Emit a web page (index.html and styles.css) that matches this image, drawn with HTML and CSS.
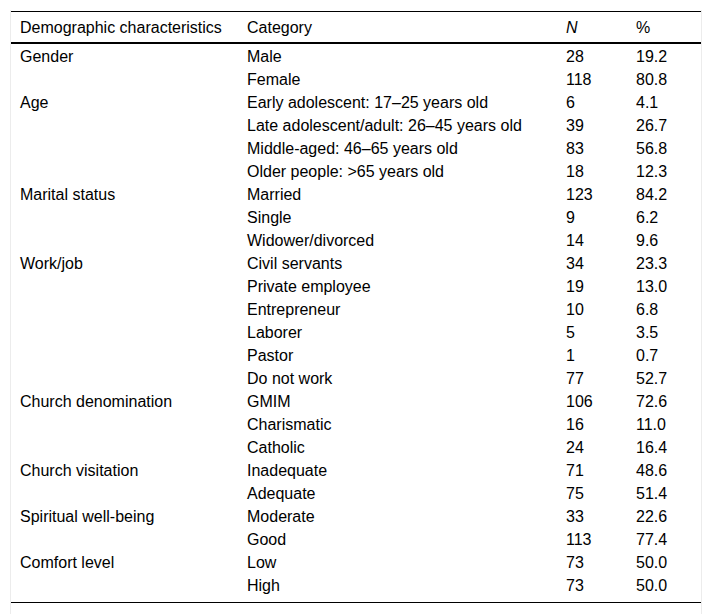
FILE: index.html
```html
<!DOCTYPE html>
<html lang="en">
<head>
<meta charset="utf-8">
<title>Demographic characteristics</title>
<link rel="stylesheet" href="styles.css">
</head>
<body>
<div class="frame">
<table class="data">
<colgroup>
<col class="c1"><col class="c2"><col class="c3"><col class="c4">
</colgroup>
<thead>
<tr><th>Demographic characteristics</th><th>Category</th><th><i>N</i></th><th>%</th></tr>
</thead>
<tbody>
<tr><td>Gender</td><td>Male</td><td>28</td><td>19.2</td></tr>
<tr><td></td><td>Female</td><td>118</td><td>80.8</td></tr>
<tr><td>Age</td><td>Early adolescent: 17–25 years old</td><td>6</td><td>4.1</td></tr>
<tr><td></td><td>Late adolescent/adult: 26–45 years old</td><td>39</td><td>26.7</td></tr>
<tr><td></td><td>Middle-aged: 46–65 years old</td><td>83</td><td>56.8</td></tr>
<tr><td></td><td>Older people: &gt;65 years old</td><td>18</td><td>12.3</td></tr>
<tr><td>Marital status</td><td>Married</td><td>123</td><td>84.2</td></tr>
<tr><td></td><td>Single</td><td>9</td><td>6.2</td></tr>
<tr><td></td><td>Widower/divorced</td><td>14</td><td>9.6</td></tr>
<tr><td>Work/job</td><td>Civil servants</td><td>34</td><td>23.3</td></tr>
<tr><td></td><td>Private employee</td><td>19</td><td>13.0</td></tr>
<tr><td></td><td>Entrepreneur</td><td>10</td><td>6.8</td></tr>
<tr><td></td><td>Laborer</td><td>5</td><td>3.5</td></tr>
<tr><td></td><td>Pastor</td><td>1</td><td>0.7</td></tr>
<tr><td></td><td>Do not work</td><td>77</td><td>52.7</td></tr>
<tr><td>Church denomination</td><td>GMIM</td><td>106</td><td>72.6</td></tr>
<tr><td></td><td>Charismatic</td><td>16</td><td>11.0</td></tr>
<tr><td></td><td>Catholic</td><td>24</td><td>16.4</td></tr>
<tr><td>Church visitation</td><td>Inadequate</td><td>71</td><td>48.6</td></tr>
<tr><td></td><td>Adequate</td><td>75</td><td>51.4</td></tr>
<tr><td>Spiritual well-being</td><td>Moderate</td><td>33</td><td>22.6</td></tr>
<tr><td></td><td>Good</td><td>113</td><td>77.4</td></tr>
<tr><td>Comfort level</td><td>Low</td><td>73</td><td>50.0</td></tr>
<tr><td></td><td>High</td><td>73</td><td>50.0</td></tr>
</tbody>
</table>
</div>
</body>
</html>
```
FILE: styles.css
```css
html, body {
  margin: 0;
  padding: 0;
  background: #fff;
}
body {
  font-family: "Liberation Sans", Arial, sans-serif;
  font-size: 16px;
  color: #000;
}
.frame {
  margin-left: 10px;
  margin-top: 10px;
  width: 690px;
  height: 603px;
  padding-top: 1px;
  border-left: 1px solid #ececec;
  border-right: 1px solid #ececec;
}
.data {
  width: 690px;
  border-collapse: collapse;
  table-layout: fixed;
  border-top: 1px solid #000;
  border-bottom: 1px solid #000;
}
.c1 { width: 227px; }
.c2 { width: 319px; }
.c3 { width: 70px; }
.c4 { width: 74px; }
.data th {
  font-weight: normal;
  text-align: left;
  padding: 7px 9px 5px;
  line-height: 18px;
  border-bottom: 2px solid #000;
}
.data td {
  text-align: left;
  padding: 4px 9px 1px;
  line-height: 18px;
  vertical-align: top;
}
.data tbody tr:last-child td {
  padding-bottom: 7px;
}
```
